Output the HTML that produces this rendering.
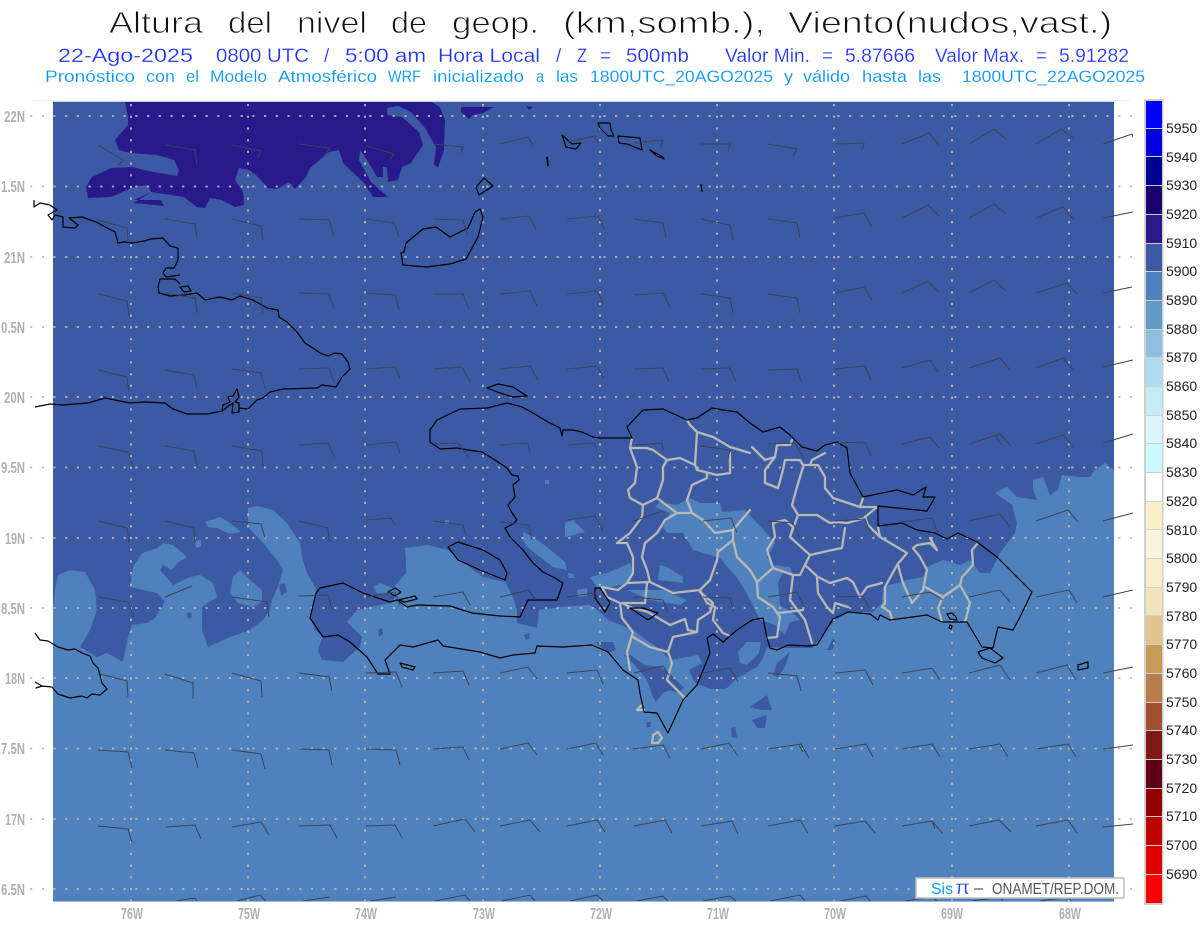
<!DOCTYPE html>
<html><head><meta charset="utf-8"><style>
html,body{margin:0;padding:0;background:#fff}
svg{display:block}
text{font-family:"Liberation Sans",sans-serif}
</style></head><body>
<svg width="1200" height="927" viewBox="0 0 1200 927" xmlns="http://www.w3.org/2000/svg">
<defs><clipPath id="m"><rect x="53" y="102" width="1061" height="799"/></clipPath><clipPath id="w"><rect x="0" y="100" width="1133" height="801"/></clipPath></defs>
<rect width="1200" height="927" fill="#fff"/>
<line x1="33" y1="100.5" x2="1130" y2="100.5" stroke="#f0f0f0"/>
<rect x="53" y="101" width="1061" height="800" fill="#3b5aa3"/>
<g clip-path="url(#m)">
<path fill="#4f82bc" d="M53 901L53 610 55 590 58 575 70 570 85 572 95 590 97 610 90 630 80 647 97 657 107 653 123 662 128 637 132 625 147 623 155 618 165 602 157 593 130 587 133 567 142 553 157 548 163 543 173 545 187 557 177 563 172 570 163 565 160 570 173 585 190 577 200 575 213 583 217 597 202 607 202 630 208 647 230 637 250 630 263 620 270 610 272 600 278 587 283 570 277 560 263 543 248 527 248 508 257 506 273 510 287 523 300 543 302 557 307 573 315 587 317 593 310 617 315 630 323 637 318 650 322 660 343 662 360 647 362 637 347 622 357 610 390 603 397 595 377 593 373 587 380 583 393 588 406 573 406 560 405 548 428 545 448 550 460 560 483 577 505 582 513 597 517 610 517 623 537 628 539 610 560 607 590 605 600 612 608 620 633 630 660 650 670 660 698 655 702 663 689 670 695 683 710 689 726 689 737 678 757 667 763 658 767 647 790 648 812 648 825 632 835 620 850 612 873 612 882 603 883 587 907 580 923 577 927 567 943 560 960 565 970 560 980 573 990 573 1000 553 1015 533 1017 523 1012 505 995 493 1007 487 1017 497 1037 500 1033 490 1033 480 1043 477 1047 487 1050 495 1058 490 1062 475 1078 477 1090 477 1095 470 1105 463 1114 470 1114 901Z
M230 593L233 577 240 570 252 582 262 590 262 602 253 607 238 603Z
M205 522L220 517 230 523 241 532 230 534 217 528 208 527Z
M195 541L201 540 201 546 196 548Z
M565 523L573 520 585 532 565 537Z
M523 532L533 537 547 547 565 562 567 570 553 567 540 557 527 547 523 540Z
M655 507L660 502 677 505 690 498 700 503 720 503 722 512 745 510 770 537 775 543 767 557 772 565 790 567 793 575 783 573 778 582 780 605 795 615 800 620 790 622 785 635 775 625 760 620 745 590 735 575 730 570 720 558 693 550 683 533 667 533 663 527 670 513Z
M590 577L607 573 630 563 633 572 627 583 613 587 597 587Z
M660 565L667 567 683 577 683 583 658 580Z
M627 590L663 590 687 600 680 605 650 600Z
M738 652L747 642 761 642 759 653 747 665 740 663Z
M577 590L587 588 587 596 578 597Z
M545 480L549 480 549 484 545 484Z M445 520L449 520 449 524 445 524Z M568 573L574 574 574 578 569 578Z"/>
<path fill="#3b5aa3" d="M623 655L630 655 645 665 660 667 668 672 684 688 678 693 670 690 663 693 656 702 653 697 647 680 633 663Z
M595 642L613 642 616 650 608 653Z
M773 675L777 663 790 652 785 667 778 677Z
M750 707L767 695 772 710 760 710Z
M752 720L767 715 765 728 757 728Z
M731 728L735 727 737 738 732 737Z
M827 650L833 638 836 642 832 650Z
M279 585L285 583 287 592 281 596Z
M186 613L191 612 192 617 188 619Z
M378 630L382 628 383 634 379 637Z
M524 635L529 633 530 638 526 640Z
M646 722L651 722 650 727 647 727Z"/>
<path fill="#281a8a" d="M125 102L128 117 128 125 115 140 119 150 130 153 157 155 174 160 179 170 177 176 153 172 132 167 111 168 92 177 86 187 88 198 111 197 134 187 147 185 151 192 134 200 161 200 164 206 134 203 151 192 184 197 197 207 205 208 210 198 222 200 235 207 244 205 243 192 235 180 239 168 249 170 256 175 268 188 277 189 289 182 295 189 306 177 310 168 329 152 339 150 343 163 364 183 373 197 388 197 371 182 359 160 360 150 365 157 373 170 377 177 383 177 383 167 387 167 388 182 398 180 402 167 411 163 423 145 419 132 402 117 387 115 387 108 398 106 411 112 425 128 436 147 434 165 438 167 444 150 445 120 440 107 432 102Z
M461 107L494 107 483 113 473 115 469 119 461 112Z
M526 106L533 107 529 110Z"/>
</g>
<line x1="53" y1="101.5" x2="1114" y2="101.5" stroke="#cfd4e2"/>
<line x1="53" y1="901.5" x2="1114" y2="901.5" stroke="#9dbbdc"/>
<!-- grid -->
<g stroke="#bdbaad" stroke-width="1.8" stroke-dasharray="2.2 9.5" fill="none">
<path d="M30 116H1134M30 186.500H1134M30 257H1134M30 327H1134M30 397H1134M30 467.500H1134M30 538H1134M30 608H1134M30 678H1134M30 748.500H1134M30 819H1134M30 889H1134"/>
<path d="M131 104V908M248 104V908M365 104V908M483 104V908M600 104V908M717 104V908M834 104V908M952 104V908M1069 104V908"/>
</g>
<!-- province borders -->
<g fill="none" stroke="#b8b8b4" stroke-width="2.3" stroke-linejoin="round" stroke-linecap="round">
<path d="M632 438L630 448 637 467 635 483 628 490 630 498 643 505 642 517 630 533 617 543 627 543 633 557 633 573 627 583 618 590 602 587 607 597 620 603 622 618 633 632 627 652 630 670"/>
<path d="M632 448L647 448 653 450 667 460 663 467 663 480 657 498 643 505"/>
<path d="M667 460L680 458 695 465 697 432 690 425 687 420"/>
<path d="M697 432L713 437 730 447 750 453"/>
<path d="M695 465L697 470 717 475 730 473 730 453"/>
<path d="M707 473L707 478 692 485 687 500 692 513 677 513 657 498"/>
<path d="M692 513L703 520 715 533 733 530 750 510"/>
<path d="M677 513L665 520 657 533 645 543 642 557 647 570 650 582 627 583"/>
<path d="M650 582L673 593 700 590 710 580 717 560 718 552 733 540 733 530"/>
<path d="M733 540L737 557 750 570"/>
<path d="M700 590L707 603 715 607 713 620 723 633 730 636"/>
<path d="M647 583L645 603 622 603 630 607 648 612 670 625 685 619 688 630 697 632 673 637 668 652 672 663 667 680 685 698"/>
<path d="M633 637L650 647 668 652"/>
<path d="M697 632L698 620 710 612 713 603 700 592"/>
<path d="M652 743L653 735 658 732 662 738 658 743Z"/>
<path d="M644 710L637 710 642 705"/>
<path d="M792 440L790 445 777 445 775 457 765 460 760 455 752 447"/>
<path d="M775 457L765 470 765 483 778 488 783 470 785 460 800 460 803 465 818 465 825 477 825 488 833 498 860 507 863 498 860 507 877 507 865 517 868 525 880 537 907 553 897 565 885 587 885 603 882 607 890 612 892 620"/>
<path d="M810 465L812 460 825 453"/>
<path d="M803 467L797 487 792 505 798 515 817 515 830 523 838 522 847 523 865 518"/>
<path d="M798 515L790 537 810 555 832 550 842 548 845 528"/>
<path d="M810 555L805 565 800 575 793 575 773 568 767 550 775 537 773 523 785 520 793 527 790 537"/>
<path d="M805 565L818 577 830 583 847 578 853 582 860 597 867 587 882 583"/>
<path d="M817 577L818 593 827 607 833 613 835 603 848 607"/>
<path d="M773 568L757 582 750 570"/>
<path d="M757 582L758 597 773 607 780 617 777 637 767 638"/>
<path d="M793 575L790 600 805 620 812 643"/>
<path d="M778 613L803 610"/>
<path d="M898 565L903 583 912 603 923 590 927 570 920 557 913 548 917 545 930 543 937 550 930 538"/>
<path d="M925 587L943 597 938 608 942 622"/>
<path d="M943 597L960 585 970 603 965 622"/>
<path d="M960 585L962 577 973 565 972 550 978 543"/>
<path d="M878 527L880 537"/>
</g>
<!-- coast -->
<g fill="none" stroke="#000" stroke-width="1.2" stroke-linejoin="round">
<path d="M35 407L50 404 63 405 88 403 105 398 130 403 145 402 165 403 173 409 187 414 207 414 222 411 223 405 230 402 228 397 233 396 237 389 239 397 235 402 239 403 239 412 232 413 233 403 230 405 222 411M239 408L248 409 257 400 263 398 270 392 283 389 317 388 322 385 336 387 342 377 350 369 348 362 342 354 335 353 328 356 320 353 313 348 305 343 297 332 287 322 279 317 278 310 267 308 253 300 240 296 232 300 220 297 205 300 197 293 184 295 170 296 159 293 158 287 160 279 175 279 180 284"/>
<path d="M178 248L178 260 174 268 166 268 163 273 166 277 180 275"/>
<path d="M178 248L170 246 163 238 151 239 144 241 132 243 124 242 118 243 115 232 96 222 82 217 69 218 78 225 75 228 63 227 63 217 55 215 52 220 48 215 55 211 57 210 50 205 40 203 34 207 34 200"/>
<path d="M180 287L188 286 191 291 184 292Z"/>
<path d="M480 209L475 212 468 228 450 237 436 227 423 229 406 243 404 252 401 253 403 265 427 267 450 264 466 259 478 237 483 217Z"/>
<path d="M484 178L476 187 479 195 493 186Z"/>
<path d="M562 135L566 147 576 149 581 143 572 144Z"/>
<path d="M547 157L548 166" stroke-width="1.8"/>
<path d="M598 123L610 123 611 130 614 136 608 136 600 128Z"/>
<path d="M618 136L640 138 642 150 627 144 619 143Z"/>
<path d="M650 150L663 157 664 159 657 156Z"/>
<path d="M701 184L702 192"/>
<path d="M487 388L498 384 513 387 527 396 513 397 500 393Z"/>
<path d="M633 438L613 438 600 438 593 437 582 432 573 430 563 430 562 436 560 428 548 422 533 413 522 407 507 403 487 408 460 409 437 420 430 430 430 442 440 449 457 448 468 450 482 452 495 460 507 468 512 475 518 476 519 480 513 485 515 497 508 505 512 513 517 520 513 524 505 528 510 537 523 550 533 563 543 572 555 578 563 583 557 600 533 600 528 600 520 617 500 616 472 613 450 606 417 605 407 607 397 600 390 602 363 593 343 583 320 588 316 593 310 618 323 637 338 635 350 642 367 657 378 674 390 674 385 660 400 645 413 647 438 640 443 646 480 652 500 658 513 655 535 653 537 646 563 647 592 645 608 652 623 670 638 680 640 693 644 712 657 713 668 733 683 700 697 685 710 653 707 638 713 634 723 642 737 630 752 620 763 618 767 638 770 648 777 650 788 645 810 646 817 645 833 619 848 612 870 614 878 620 880 615 890 620 927 615 942 622 967 622 982 647 993 648 998 627 1013 630 1020 617 1032 592 1023 583 997 557 977 542 958 533 947 539 935 533 917 530 902 523 878 526 878 506 927 511 935 497 923 497 926 487 913 495 897 490 863 497 850 473 847 448 837 442 825 445 817 451 802 447 790 435 780 427 763 432 750 423 737 412 723 410 712 408 697 418 687 420 663 409 643 410 627 427 632 438"/>
<path d="M448 547L458 542 483 550 500 560 507 573 505 580 480 570 458 560Z"/>
<path d="M400 663L415 667 413 670 402 667Z"/>
<path d="M388 592L395 588 401 592 395 596Z"/>
<path d="M398 600L415 596 417 599 405 602Z"/>
<path d="M630 608L643 608 658 613 648 620Z"/>
<path d="M595 588L600 588 610 603 605 612 595 598Z"/>
<path d="M978 652L990 648 1003 658 995 663 982 658Z"/>
<path d="M1078 665L1088 662 1088 668 1078 670Z"/>
<path d="M947 614L952 613 956 617 957 620 950 619Z"/>
<path d="M950 625L952 626 951 629 949 628Z"/>
<path d="M35 633L40 640 48 641 58 647 68 650 75 649 82 653 90 656 93 663 98 668 102 683 107 689 100 695 92 694 87 698 82 696 70 698 58 694 52 687 42 686 36 688 42 686 35 682"/>
</g>
<!-- wind barbs -->
<path clip-path="url(#w)" fill="none" stroke="#3c4258" stroke-width="1" d="
M98 145L123 160 118 166M165 145L195 150 197 165M232 145L261 151 258 158M299 144L330 148 325 155M366 146L394 154 390 160M433 144L463 147 461 153M500 144L528 137 533 145M567 142L595 136 598 143M634 143L663 140 661 147M701 144L730 144 728 152M768 144L797 149 793 156M835 144L864 143 862 150M902 144L929 133 939 145M969 144L994 129 1006 139M1036 144L1061 129 1073 138M1103 144L1132 134 1133 137
M98 220L127 228 128 242M165 219L195 224 197 239M232 219L261 226 263 240M299 219L329 220 334 235M366 219L394 223 399 237M433 219L463 220 468 235M500 219L529 216 536 229M567 219L598 216 605 230M634 219L663 223 666 238M701 219L730 225 733 240M768 219L797 223 800 238M835 218L864 213 872 227M902 218L928 205 939 216M969 218L994 204 1006 214M1036 218L1063 207 1073 219M1103 218L1133 212
M98 294L127 301 129 316M165 293L195 298 197 313M232 293L261 298 263 313M299 293L329 294 334 309M366 293L395 295 399 310M433 294L463 294 469 309M500 294L530 291 537 306M567 294L597 291 604 305M634 295L663 293 670 307M701 294L730 298 733 313M768 294L797 298 800 313M835 293L864 287 872 300M902 293L928 281 939 292M969 293L994 280 1006 291M1036 293L1067 283 1077 294M1103 293L1132 287
M98 370L127 377 129 392M165 370L194 375 197 389M232 369L261 373 265 388M299 369L329 368 334 383M366 369L395 367 400 378M433 369L462 367 470 382M500 369L530 366 538 380M567 369L597 366 604 378M634 369L663 368 669 382M701 369L730 368 736 382M768 370L797 369 802 383M835 369L865 366 871 380M902 368L930 360 938 372M969 368L1000 358 1010 370M1036 368L1063 358 1073 370M1103 367L1133 360
M98 446L128 452 133 467M165 446L194 451 197 466M232 446L262 451 263 466M299 445L328 443 334 457M366 445L396 442 400 453M433 444L458 443 468 457M500 445L528 443 530 452M568 445L594 443 597 450M635 445L662 443 663 450M700 446L730 450 728 458M768 444L795 443 803 457M837 443L865 442 871 456M902 444L930 437 939 448M969 444L1000 434 1011 446M995 435L1002 445M1036 444L1063 435 1073 447M1103 443L1133 434
M98 521L127 528 129 543M165 521L194 528 195 543M232 521L261 524 265 538M299 521L328 528 329 542M366 520L391 518 395 525M433 521L463 525 466 536M500 522L529 525 532 540M567 520L595 516 603 531M634 521L662 511 665 513M703 521L731 518 737 533M768 521L793 523 800 538M835 521L865 519 870 532M902 522L932 518 938 533M969 521L1000 514 1010 527M1036 521L1068 510 1078 522M1103 521L1133 513
M98 597L128 602 134 617M165 597L192 586M232 597L267 602 269 617M299 596L328 595 332 610M366 597L395 592 400 605M433 597L463 592 470 605M500 597L529 590 535 600M567 597L595 593 599 600M634 597L663 600 668 613M703 597L730 598 734 612M768 597L797 592 804 607M835 597L863 596 869 608M902 597L930 592 943 600M969 597L1000 590 1010 602M1036 597L1069 590 1077 603M1103 597L1133 590
M100 674L127 681 128 697M165 674L193 683 193 699M232 673L261 681 262 697M299 673L329 677 332 691M366 673L396 672 402 687M433 673L463 671 469 685M500 673L528 667 537 679M567 673L597 670 603 684M634 673L663 666 669 675M702 673L730 668 738 682M768 673L797 676 801 691M835 673L865 670 873 685M902 673L932 668 940 680M969 673L1000 665 1010 680M1036 673L1067 665 1076 680M1103 673L1133 667
M98 750L128 752 132 768M165 750L194 753 198 768M232 750L261 754 265 769M299 749L329 750 332 765M366 749L396 750 400 765M433 749L463 747 469 760M500 749L528 743 537 755M567 749L596 743 603 755M633 749L663 745 670 758M701 749L729 743 738 756M768 749L801 744 809 758M799 745L803 752M835 749L866 744 873 757M902 749L932 744 940 757M969 749L1000 744 1008 757M1036 749L1068 744 1076 757M1103 749L1133 745
M98 826L128 829 132 843M165 827L195 825 201 839M232 827L261 822 269 835M299 826L330 825 337 838M366 826L395 825 402 838M433 826L465 819 475 832M500 826L530 820 540 832M567 826L597 820 605 832M634 826L665 820 672 833M701 826L732 821 738 834M768 826L800 820 808 833M835 826L865 821 875 833M902 826L932 821 943 834M932 821L935 829M969 826L999 820 1011 832M1036 826L1068 820 1077 833M1103 827L1133 824
M176 901L195 898 197 901M237 901L260 895 266 901M303 901L330 897M370 901L396 897M435 901L465 895 470 901M502 901L530 895 535 901M570 901L597 895 603 901M636 901L663 896 668 901M703 901L730 896 736 901M770 901L800 895 805 901M840 901L866 896 870 901M905 901L932 897 937 901M972 901L1000 897 1003 901M1040 901L1068 897 1071 901"/>
<!-- colourbar -->
<rect x="1144" y="99" width="19.500" height="806" fill="#cfcfcf"/>
<g shape-rendering="crispEdges">
<rect x="1146" y="101" width="16" height="27" fill="#0000ff"/><rect x="1146" y="129" width="16" height="27" fill="#0000dc"/><rect x="1146" y="157" width="16" height="28" fill="#000090"/><rect x="1146" y="186" width="16" height="28" fill="#1a0070"/><rect x="1146" y="215" width="16" height="28" fill="#281a8a"/><rect x="1146" y="244" width="16" height="27" fill="#3b5aa3"/><rect x="1146" y="272" width="16" height="28" fill="#4f82bc"/><rect x="1146" y="301" width="16" height="28" fill="#6198c8"/><rect x="1146" y="330" width="16" height="27" fill="#8cbfe0"/><rect x="1146" y="358" width="16" height="28" fill="#b0dcee"/><rect x="1146" y="387" width="16" height="28" fill="#c4ecf4"/><rect x="1146" y="416" width="16" height="27" fill="#dcf4fa"/><rect x="1146" y="444" width="16" height="28" fill="#ccf8ff"/><rect x="1146" y="473" width="16" height="28" fill="#ffffff"/><rect x="1146" y="502" width="16" height="27" fill="#f8f0c8"/><rect x="1146" y="530" width="16" height="28" fill="#fbf3dc"/><rect x="1146" y="559" width="16" height="28" fill="#f7eecd"/><rect x="1146" y="588" width="16" height="27" fill="#f2e4b8"/><rect x="1146" y="616" width="16" height="28" fill="#e0c48c"/><rect x="1146" y="645" width="16" height="28" fill="#c89a58"/><rect x="1146" y="674" width="16" height="28" fill="#b87c48"/><rect x="1146" y="703" width="16" height="27" fill="#a05030"/><rect x="1146" y="731" width="16" height="28" fill="#801818"/><rect x="1146" y="760" width="16" height="28" fill="#600018"/><rect x="1146" y="789" width="16" height="27" fill="#900000"/><rect x="1146" y="817" width="16" height="28" fill="#bf0000"/><rect x="1146" y="846" width="16" height="28" fill="#dc0000"/><rect x="1146" y="875" width="16" height="28" fill="#ff0000"/>
</g>
<g font-size="14" fill="#222">
<text x="1166" y="133">5950</text><text x="1166" y="162">5940</text><text x="1166" y="190">5930</text><text x="1166" y="219">5920</text><text x="1166" y="248">5910</text><text x="1166" y="276">5900</text><text x="1166" y="305">5890</text><text x="1166" y="334">5880</text><text x="1166" y="362">5870</text><text x="1166" y="391">5860</text><text x="1166" y="420">5850</text><text x="1166" y="448">5840</text><text x="1166" y="477">5830</text><text x="1166" y="506">5820</text><text x="1166" y="535">5810</text><text x="1166" y="563">5800</text><text x="1166" y="592">5790</text><text x="1166" y="621">5780</text><text x="1166" y="649">5770</text><text x="1166" y="678">5760</text><text x="1166" y="707">5750</text><text x="1166" y="735">5740</text><text x="1166" y="764">5730</text><text x="1166" y="793">5720</text><text x="1166" y="821">5710</text><text x="1166" y="850">5700</text><text x="1166" y="879">5690</text>
</g>
<!-- axis labels -->
<g font-size="16" font-weight="bold" fill="#b0b0b0">
<text x="4" y="122" textLength="21" lengthAdjust="spacingAndGlyphs">22N</text>
<text x="1" y="192" textLength="24" lengthAdjust="spacingAndGlyphs">1.5N</text>
<text x="4" y="263" textLength="21" lengthAdjust="spacingAndGlyphs">21N</text>
<text x="1" y="333" textLength="24" lengthAdjust="spacingAndGlyphs">0.5N</text>
<text x="4" y="403" textLength="21" lengthAdjust="spacingAndGlyphs">20N</text>
<text x="1" y="473" textLength="24" lengthAdjust="spacingAndGlyphs">9.5N</text>
<text x="5" y="544" textLength="20" lengthAdjust="spacingAndGlyphs">19N</text>
<text x="1" y="614" textLength="24" lengthAdjust="spacingAndGlyphs">8.5N</text>
<text x="5" y="684" textLength="20" lengthAdjust="spacingAndGlyphs">18N</text>
<text x="1" y="754" textLength="24" lengthAdjust="spacingAndGlyphs">7.5N</text>
<text x="5" y="825" textLength="20" lengthAdjust="spacingAndGlyphs">17N</text>
<text x="1" y="895" textLength="24" lengthAdjust="spacingAndGlyphs">6.5N</text>
<text x="121" y="919" textLength="22" lengthAdjust="spacingAndGlyphs">76W</text>
<text x="238" y="919" textLength="22" lengthAdjust="spacingAndGlyphs">75W</text>
<text x="355" y="919" textLength="22" lengthAdjust="spacingAndGlyphs">74W</text>
<text x="473" y="919" textLength="22" lengthAdjust="spacingAndGlyphs">73W</text>
<text x="590" y="919" textLength="22" lengthAdjust="spacingAndGlyphs">72W</text>
<text x="707" y="919" textLength="22" lengthAdjust="spacingAndGlyphs">71W</text>
<text x="824" y="919" textLength="22" lengthAdjust="spacingAndGlyphs">70W</text>
<text x="941" y="919" textLength="22" lengthAdjust="spacingAndGlyphs">69W</text>
<text x="1059" y="919" textLength="22" lengthAdjust="spacingAndGlyphs">68W</text>
</g>
<!-- title -->
<g font-size="31" fill="#111" stroke="#fff" stroke-width=".9">
<text x="109" y="33" textLength="94" lengthAdjust="spacingAndGlyphs">Altura</text>
<text x="228" y="33" textLength="44" lengthAdjust="spacingAndGlyphs">del</text>
<text x="297" y="33" textLength="70" lengthAdjust="spacingAndGlyphs">nivel</text>
<text x="391" y="33" textLength="36" lengthAdjust="spacingAndGlyphs">de</text>
<text x="452" y="33" textLength="87" lengthAdjust="spacingAndGlyphs">geop.</text>
<text x="563" y="33" textLength="202" lengthAdjust="spacingAndGlyphs">(km,somb.),</text>
<text x="788" y="33" textLength="324" lengthAdjust="spacingAndGlyphs">Viento(nudos,vast.)</text>
</g>
<g font-size="19" fill="#1f33ff" stroke="#fff" stroke-width=".2">
<text x="58" y="62" textLength="135" lengthAdjust="spacingAndGlyphs">22-Ago-2025</text>
<text x="216" y="62" textLength="93" lengthAdjust="spacingAndGlyphs">0800 UTC</text>
<text x="324" y="62" textLength="6" lengthAdjust="spacing">/</text>
<text x="345" y="62" textLength="81" lengthAdjust="spacingAndGlyphs">5:00 am</text>
<text x="438" y="62" textLength="102" lengthAdjust="spacingAndGlyphs">Hora Local</text>
<text x="556" y="62" textLength="6" lengthAdjust="spacing">/</text>
<text x="577" y="62" textLength="10" lengthAdjust="spacingAndGlyphs">Z</text>
<text x="600" y="62" textLength="11" lengthAdjust="spacingAndGlyphs">=</text>
<text x="626" y="62" textLength="63" lengthAdjust="spacingAndGlyphs">500mb</text>
<text x="725" y="62" textLength="85" lengthAdjust="spacingAndGlyphs">Valor Min.</text>
<text x="822" y="62" textLength="11" lengthAdjust="spacingAndGlyphs">=</text>
<text x="845" y="62" textLength="70" lengthAdjust="spacingAndGlyphs">5.87666</text>
<text x="935" y="62" textLength="89" lengthAdjust="spacingAndGlyphs">Valor Max.</text>
<text x="1036" y="62" textLength="11" lengthAdjust="spacingAndGlyphs">=</text>
<text x="1059" y="62" textLength="70" lengthAdjust="spacingAndGlyphs">5.91282</text>
</g>
<g font-size="17" fill="#0094ff" stroke="#fff" stroke-width=".15">
<text x="45" y="82" textLength="90" lengthAdjust="spacingAndGlyphs">Pronóstico</text>
<text x="146" y="82" textLength="29" lengthAdjust="spacingAndGlyphs">con</text>
<text x="186" y="82" textLength="13" lengthAdjust="spacingAndGlyphs">el</text>
<text x="210" y="82" textLength="57" lengthAdjust="spacingAndGlyphs">Modelo</text>
<text x="278" y="82" textLength="99" lengthAdjust="spacingAndGlyphs">Atmosférico</text>
<text x="388" y="82" textLength="33" lengthAdjust="spacingAndGlyphs">WRF</text>
<text x="433" y="82" textLength="91" lengthAdjust="spacingAndGlyphs">inicializado</text>
<text x="536" y="82" textLength="8" lengthAdjust="spacingAndGlyphs">a</text>
<text x="556" y="82" textLength="22" lengthAdjust="spacingAndGlyphs">las</text>
<text x="590" y="82" textLength="183" lengthAdjust="spacingAndGlyphs">1800UTC_20AGO2025</text>
<text x="784" y="82" textLength="9" lengthAdjust="spacingAndGlyphs">y</text>
<text x="803" y="82" textLength="47" lengthAdjust="spacingAndGlyphs">válido</text>
<text x="862" y="82" textLength="45" lengthAdjust="spacingAndGlyphs">hasta</text>
<text x="918" y="82" textLength="23" lengthAdjust="spacingAndGlyphs">las</text>
<text x="962" y="82" textLength="183" lengthAdjust="spacingAndGlyphs">1800UTC_22AGO2025</text>
</g>
<!-- watermark -->
<rect x="916" y="878" width="208" height="20" fill="#fff" stroke="#bdbdbd" stroke-width="1.500"/>
<text x="931" y="894" font-size="16" fill="#0a9cff" textLength="22" lengthAdjust="spacingAndGlyphs">Sis</text>
<text x="955" y="894" font-size="19" fill="#2b3fff" stroke="#fff" stroke-width=".3" textLength="15" lengthAdjust="spacingAndGlyphs">π</text>
<line x1="974" y1="889" x2="983" y2="889" stroke="#555" stroke-width="1.200"/>
<text x="992" y="894" font-size="16" fill="#555" textLength="127" lengthAdjust="spacingAndGlyphs">ONAMET/REP.DOM.</text>
</svg>
</body></html>
